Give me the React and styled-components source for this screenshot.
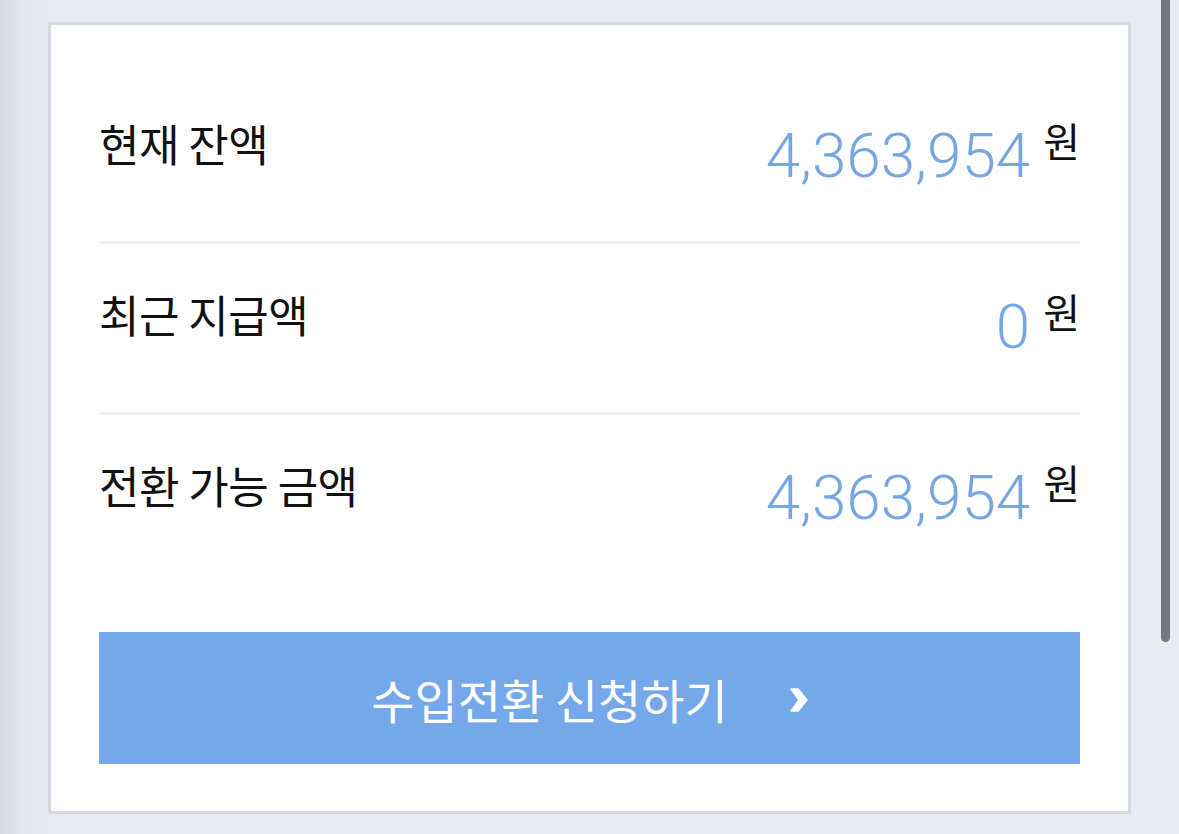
import styled, { createGlobalStyle } from "styled-components";

const GlobalStyle = createGlobalStyle`
  html, body {
    margin: 0;
    padding: 0;
  }
  body {
    background: linear-gradient(90deg, #d6d9dd 0px, #e2e5e9 20px, #e7eaee 46px, #e7eaee 100%);
    font-family: "Noto Sans CJK KR", "Noto Sans", sans-serif;
    color: #111;
  }
`;

const Page = styled.div`
  padding: 22px 0 0 48px;
  min-height: 834px;
  box-sizing: border-box;
`;

const Card = styled.section`
  width: 1083px;
  box-sizing: border-box;
  background: #fff;
  border: 3px solid #d5d8dc;
  padding: 48px 48px 47px;
`;

const Row = styled.div`
  display: flex;
  justify-content: space-between;
  align-items: flex-start;
  height: 171px;
  box-sizing: border-box;
  padding-top: 48px;

  &:not(:last-of-type) {
    border-bottom: 3px solid #edeff2;
  }
`;

const Label = styled.div`
  font-size: 44px;
  line-height: 1;
  letter-spacing: -0.5px;
`;

const Amount = styled.div`
  display: flex;
  align-items: flex-start;
  gap: 13px;
`;

const Number = styled.span`
  font-family: Roboto, "Liberation Sans", sans-serif;
  font-weight: 300;
  font-size: 62px;
  line-height: 1;
  color: #77a7e2;
  margin-top: 4px;
`;

const Unit = styled.span`
  font-size: 40px;
  line-height: 1;
  margin-top: -1px;
`;

const ApplyButton = styled.button`
  display: flex;
  align-items: center;
  justify-content: center;
  gap: 62px;
  width: 100%;
  height: 132px;
  margin-top: 46px;
  padding: 0;
  border: none;
  background: #75a7eb;
  color: #fff;
  font-family: "Noto Sans CJK KR", "Noto Sans", sans-serif;
  font-size: 47px;
  cursor: pointer;

  svg {
    margin-top: 4px;
  }
`;

const Chevron = () => (
  <svg width="18" height="26" viewBox="0 0 18 26" aria-hidden="true">
    <polygon
      points="1,2 8,2 17,13 8,24 1,24 9,13"
      fill="#fff"
      stroke="#fff"
      strokeWidth="1.5"
      strokeLinejoin="round"
    />
  </svg>
);

const Scrollbar = styled.div`
  position: fixed;
  top: 0;
  right: 9px;
  width: 9px;
  height: 642px;
  background: #77777a;
  border-radius: 0 0 5px 5px;
`;

const rows = [
  { label: "현재 잔액", amount: 4363954 },
  { label: "최근 지급액", amount: 0 },
  { label: "전환 가능 금액", amount: 4363954 },
];

export default function App() {
  return (
    <>
      <GlobalStyle />
      <Page>
        <Card>
          {rows.map((r) => (
            <Row key={r.label}>
              <Label>{r.label}</Label>
              <Amount>
                <Number>{r.amount.toLocaleString("en-US")}</Number>
                <Unit>원</Unit>
              </Amount>
            </Row>
          ))}
          <ApplyButton>
            <span>수입전환 신청하기</span>
            <Chevron />
          </ApplyButton>
        </Card>
      </Page>
      <Scrollbar />
    </>
  );
}
